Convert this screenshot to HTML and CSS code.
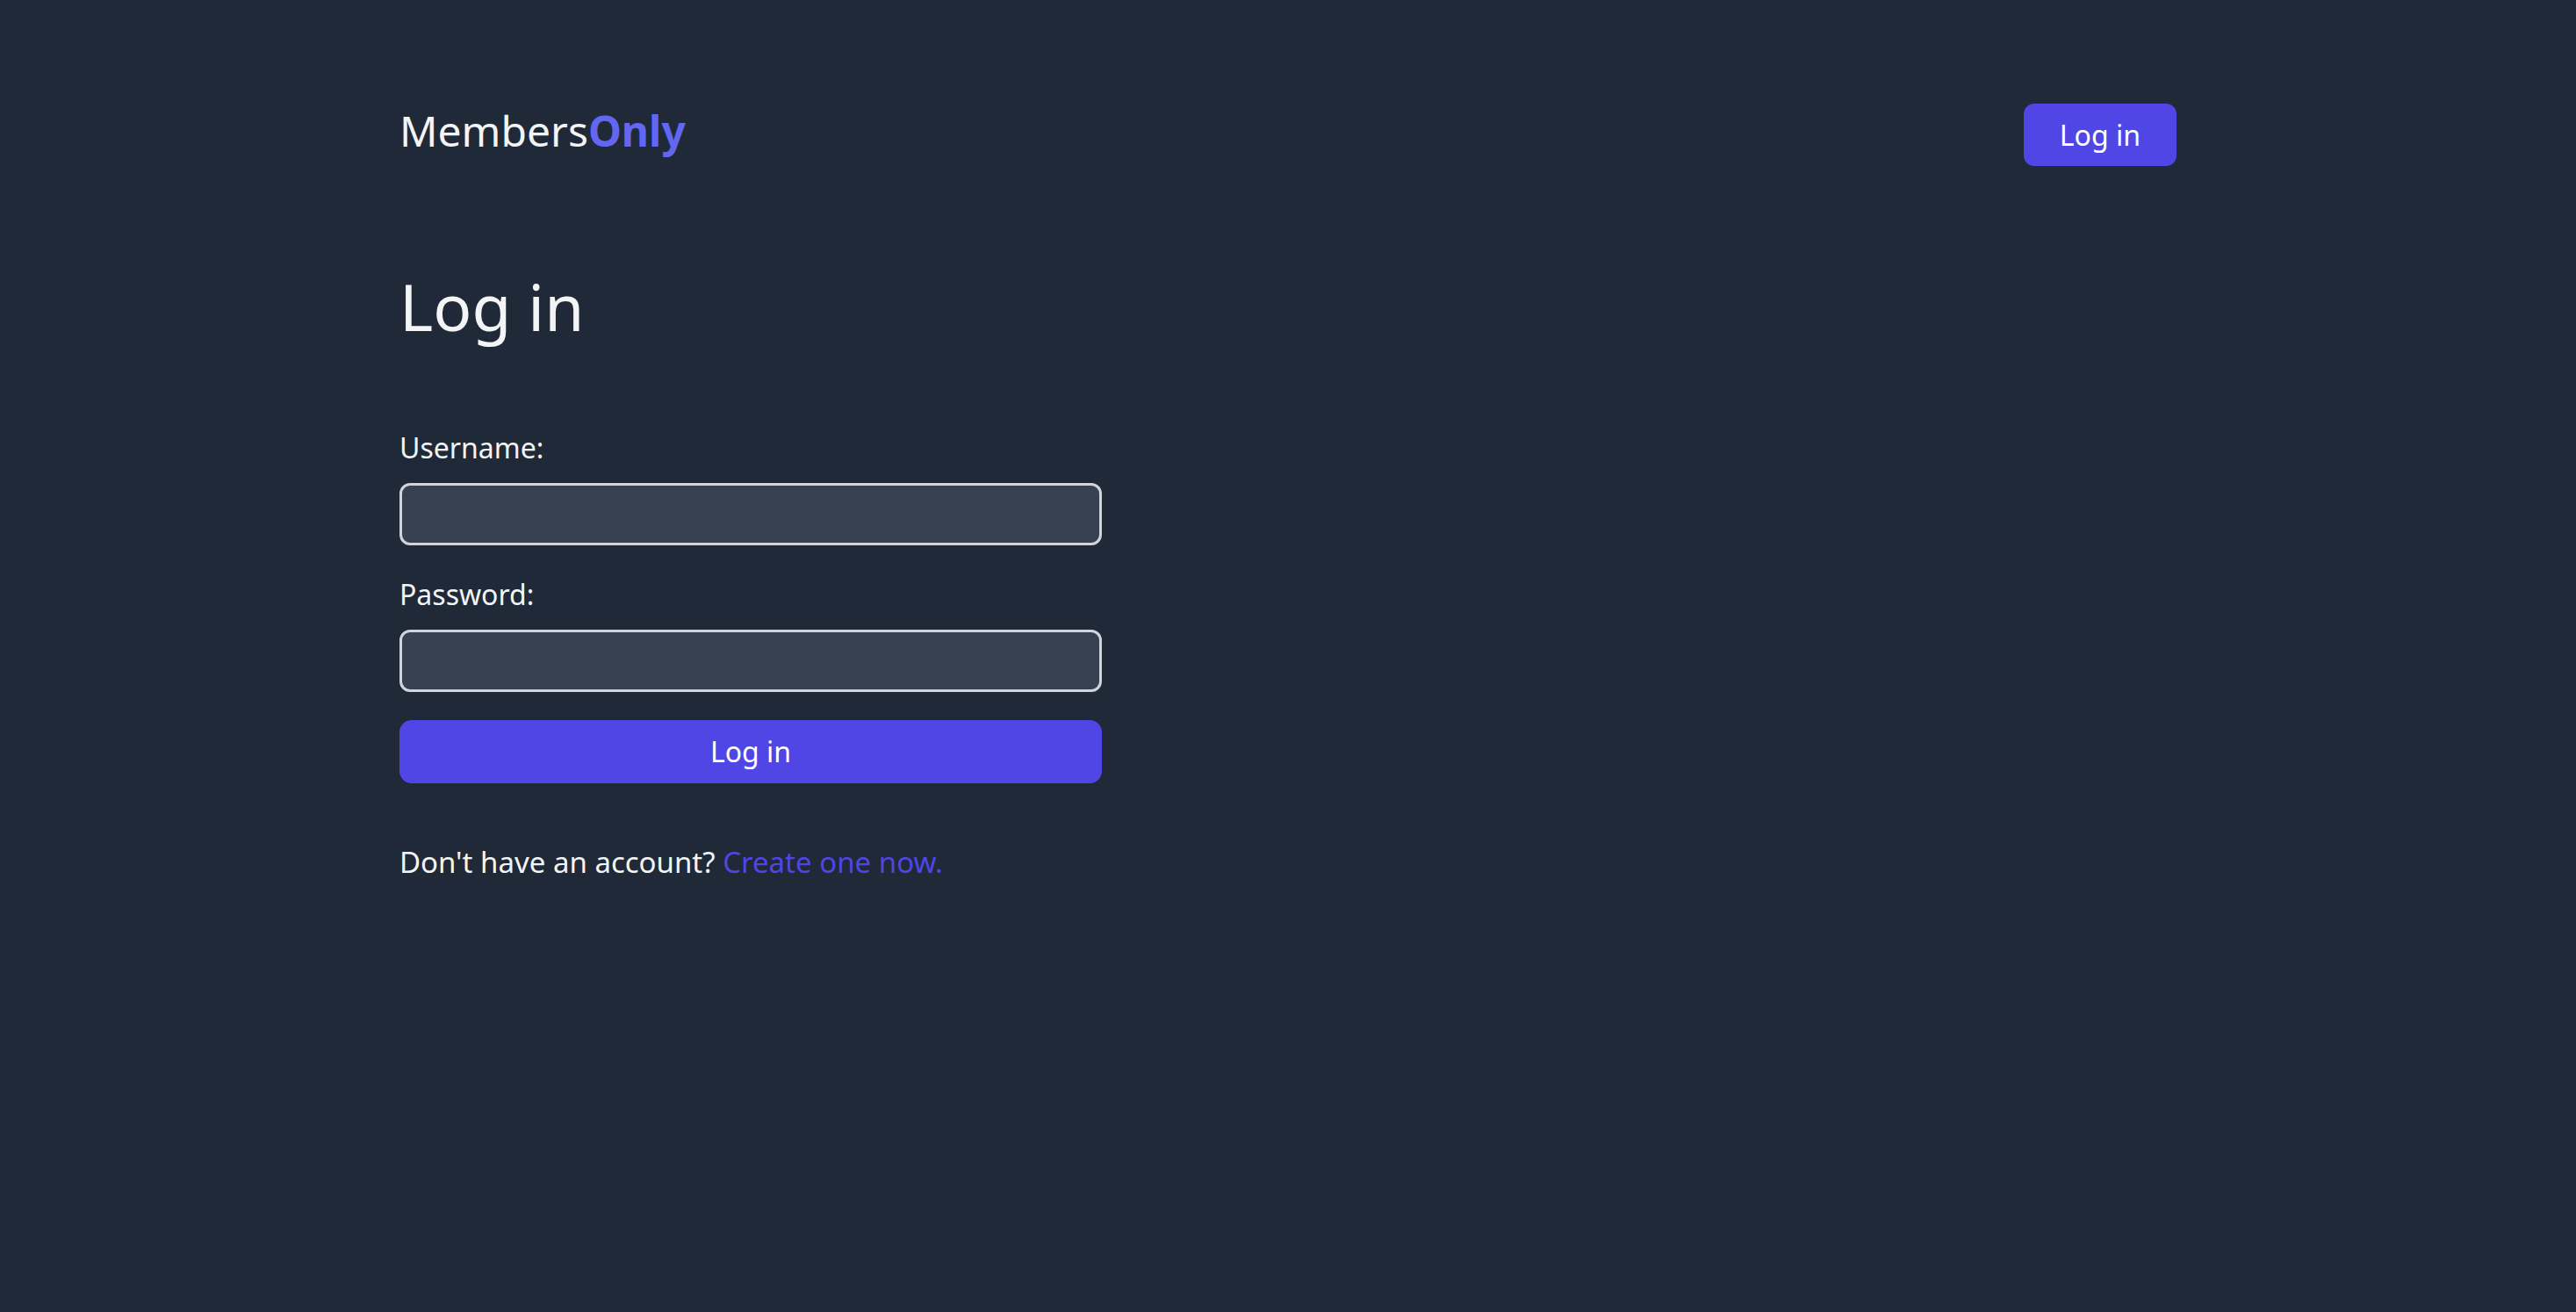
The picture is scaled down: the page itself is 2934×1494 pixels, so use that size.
FILE: index.html
```html
<!DOCTYPE html>
<html lang="en">
<head>
<meta charset="utf-8">
<title>MembersOnly - Log in</title>
<link rel="stylesheet" href="styles.css">
</head>
<body>
  <div class="page">
    <header class="header">
      <a class="logo" href="#">Members<span class="logo-accent">Only</span></a>
      <a class="nav-btn" href="#">Log in</a>
    </header>
    <main class="main">
      <h1 class="title">Log in</h1>
      <form class="form">
        <div class="field">
          <label class="label" for="username">Username:</label>
          <input class="input" id="username" type="text">
        </div>
        <div class="field">
          <label class="label" for="password">Password:</label>
          <input class="input" id="password" type="password">
        </div>
        <button class="submit" type="button">Log in</button>
      </form>
      <p class="signup">Don't have an account? <a class="link" href="#">Create one now.</a></p>
    </main>
  </div>
</body>
</html>
```

FILE: styles.css
```css
html, body {
  margin: 0;
  padding: 0;
}

body {
  background: #1f2937;
  color: #f3f4f6;
  font-family: "Noto Sans", "Open Sans", sans-serif;
  min-height: 100vh;
}

.page {
  width: 2024px;
  margin: 0 auto;
}

.header {
  display: flex;
  justify-content: space-between;
  align-items: center;
  padding-top: 118px;
}

.logo {
  font-size: 48px;
  line-height: 61px;
  color: #f3f4f6;
  text-decoration: none;
  padding-bottom: 10px;
}

.logo-accent {
  color: #6366f1;
  font-weight: 700;
}

.nav-btn {
  display: block;
  background: #4f46e5;
  color: #ffffff;
  font-size: 32px;
  line-height: 48px;
  padding: 12px 41px 11px;
  border-radius: 12px;
  text-decoration: none;
}

.main {
  display: flex;
  flex-direction: column;
}

.title {
  margin: 114px 0 0;
  font-size: 73px;
  line-height: 91px;
  font-weight: 400;
  color: #f3f4f6;
}

.form {
  width: 800px;
  margin-top: 92px;
  display: flex;
  flex-direction: column;
  gap: 32px;
}

.field {
  display: flex;
  flex-direction: column;
  gap: 16px;
}

.label {
  font-size: 32px;
  line-height: 48px;
  color: #f3f4f6;
}

.input {
  box-sizing: border-box;
  height: 71px;
  width: 100%;
  margin: 0;
  background: #374151;
  border: 3px solid #d1d5db;
  border-radius: 12px;
  color: #f3f4f6;
  font-family: inherit;
  font-size: 32px;
  padding: 0 16px;
  outline: none;
}

.submit {
  box-sizing: border-box;
  height: 72px;
  width: 100%;
  margin: 0;
  border: 0;
  border-radius: 14px;
  background: #4f46e5;
  color: #ffffff;
  font-family: inherit;
  font-size: 32px;
  line-height: 48px;
  cursor: pointer;
}

.signup {
  margin: 66px 0 0;
  font-size: 33px;
  line-height: 48px;
  color: #f3f4f6;
}

.link {
  color: #4f46e5;
  text-decoration: none;
}
```
